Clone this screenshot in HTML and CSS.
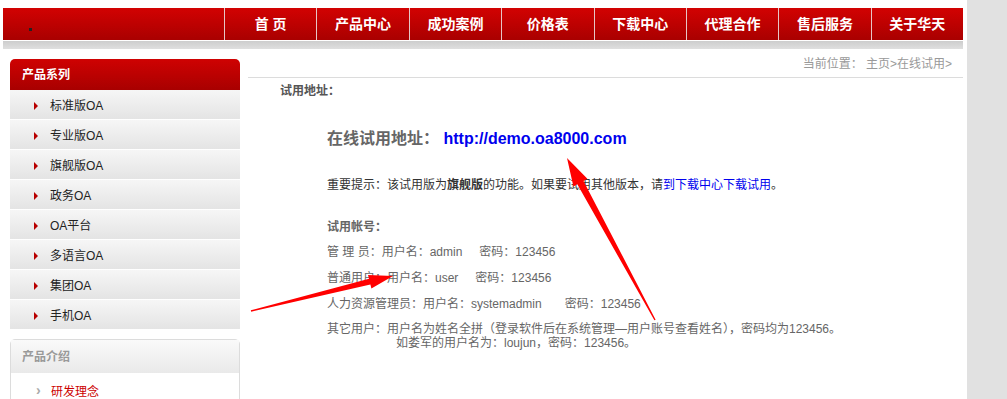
FILE: index.html
```html
<!DOCTYPE html>
<html lang="zh-CN">
<head>
    <meta charset="UTF-8">
    <title>在线试用</title>
    <link rel="stylesheet" href="styles.css">
</head>
<body>
    <div class="page">
        <div class="nav">
            <div class="nav-logo"><span class="logo-dot"></span></div>
            <a class="nav-item" href="#">首 页</a>
            <a class="nav-item" href="#">产品中心</a>
            <a class="nav-item" href="#">成功案例</a>
            <a class="nav-item" href="#">价格表</a>
            <a class="nav-item" href="#">下载中心</a>
            <a class="nav-item" href="#">代理合作</a>
            <a class="nav-item" href="#">售后服务</a>
            <a class="nav-item" href="#">关于华天</a>
        </div>
        <div class="nav-shadow"></div>

        <div class="layout">
            <aside class="sidebar">
                <div class="side-box">
                    <h3 class="side-title">产品系列</h3>
                    <ul class="side-list">
                        <li>标准版OA</li>
                        <li>专业版OA</li>
                        <li>旗舰版OA</li>
                        <li>政务OA</li>
                        <li>OA平台</li>
                        <li>多语言OA</li>
                        <li>集团OA</li>
                        <li>手机OA</li>
                    </ul>
                </div>
                <div class="intro-box">
                    <h3 class="intro-title">产品介绍</h3>
                    <ul class="intro-list">
                        <li>研发理念</li>
                    </ul>
                </div>
            </aside>

            <main class="main">
                <div class="crumb">当前位置： 主页&gt;在线试用&gt;</div>
                <div class="label">试用地址：</div>
                <div class="content">
                    <p class="demo-url">在线试用地址： <a href="#">http://demo.oa8000.com</a></p>
                    <p class="notice">重要提示：该试用版为<b>旗舰版</b>的功能。如果要试用其他版本，请<a href="#">到下载中心下载试用</a>。</p>
                    <div class="accounts-title">试用帐号：</div>
                    <p class="account">管 理 员：用户名：admin<span class="pwd">密码：123456</span></p>
                    <p class="account">普通用户：用户名：user<span class="pwd">密码：123456</span></p>
                    <p class="account">人力资源管理员：用户名：systemadmin<span class="pwd pwd-wide">密码：123456</span></p>
                    <p class="account-other">其它用户：用户名为姓名全拼（登录软件后在系统管理—用户账号查看姓名），密码均为123456。<span class="other-example">如娄军的用户名为：loujun，密码：123456。</span></p>
                </div>
            </main>
        </div>

        <!-- red annotation arrows drawn over the page -->
        <svg class="arrows" width="1007" height="399" viewBox="0 0 1007 399">
            <polygon fill="#ff0000" points="655.6,319.7 583.5,180.9 587.4,178.8 567,158 573.4,186.4 577.3,184.3 654.4,320.3"/>
            <polygon fill="#ff0000" points="251.2,311.7 370.4,284.6 371.4,288.5 393,276 368,274.9 369,278.8 250.8,310.3"/>
        </svg>
    </div>
</body>
</html>
```

FILE: styles.css
```css
* {
    margin: 0;
    padding: 0;
    box-sizing: border-box;
}

body {
    background-color: #e1e1e1;
    font-family: "Liberation Sans", "Noto Sans CJK SC", sans-serif;
    font-size: 12px;
    color: #333;
}

a {
    text-decoration: none;
}

.page {
    position: relative;
    width: 967px;
    height: 399px;
    overflow: hidden;
    background: #fff;
    padding-top: 8px;
}

/* top navigation */
.nav {
    display: flex;
    height: 32px;
    margin: 0 4px 0 3px;
    background: linear-gradient(#d20202, #a90000);
}

.nav-logo {
    width: 221px;
    padding: 20px 0 0 26px;
}

.logo-dot {
    display: block;
    width: 3px;
    height: 3px;
    background: #222;
}

.nav-item {
    flex: 1;
    border-left: 1px solid #e6c6c6;
    color: #fff;
    font-size: 14px;
    font-weight: bold;
    line-height: 32px;
    text-align: center;
}

.nav-shadow {
    height: 8px;
    margin: 1px 4px 0 3px;
    background: linear-gradient(#cdcdcd, #dfdfdf);
}

.layout {
    display: flex;
    margin-top: 10px;
}

/* sidebar */
.sidebar {
    width: 230px;
    margin-left: 10px;
}

.side-title {
    height: 31px;
    padding: 1px 0 0 12px;
    border-radius: 5px 5px 0 0;
    background: linear-gradient(#cf0202, #a80000);
    color: #fff;
    font-size: 12px;
    line-height: 30px;
}

.side-list {
    list-style: none;
}

.side-list li {
    position: relative;
    height: 29px;
    margin-bottom: 1px;
    padding: 3px 0 0 40px;
    background: linear-gradient(#f6f6f6, #e4e4e4);
    color: #222;
    font-size: 12px;
    line-height: 26px;
}

.side-list li::before {
    content: "";
    position: absolute;
    left: 24px;
    top: 12px;
    border-left: 4px solid #b80000;
    border-top: 4px solid transparent;
    border-bottom: 4px solid transparent;
}

.intro-box {
    margin-top: 10px;
    border: 1px solid #dcdcdc;
    border-radius: 5px 5px 0 0;
}

.intro-title {
    height: 33px;
    padding: 1px 0 0 11px;
    background: linear-gradient(#fafafa, #e9e9e9);
    color: #999;
    font-size: 12px;
    line-height: 32px;
}

.intro-list {
    list-style: none;
    padding-top: 10px;
}

.intro-list li {
    position: relative;
    padding-left: 40px;
    color: #c00;
    font-size: 12px;
    line-height: 18px;
}

.intro-list li::before {
    content: "›";
    position: absolute;
    left: 25px;
    top: -2px;
    color: #aaa;
    font-size: 14px;
    font-weight: bold;
}

/* main content */
.main {
    flex: 1;
    margin: -9px 4px 0 8px;
}

.crumb {
    height: 28px;
    padding: 6px 11px 0 0;
    border-bottom: 1px solid #dcdcdc;
    color: #999;
    line-height: 16px;
    text-align: right;
}

.label {
    margin-top: 3px;
    padding-left: 32px;
    color: #555;
    font-weight: bold;
    line-height: 20px;
}

.content {
    padding-left: 79px;
}

.demo-url {
    margin-top: 26px;
    color: #666;
    font-size: 16px;
    font-weight: bold;
    line-height: 24px;
}

.demo-url a {
    color: #0000ee;
}

.notice {
    margin-top: 24px;
    color: #333;
    line-height: 20px;
}

.notice a {
    color: #0000ee;
}

.accounts-title {
    margin-top: 22px;
    color: #666;
    font-weight: bold;
    line-height: 20px;
}

.account {
    margin-top: 2px;
    color: #666;
    line-height: 26px;
}

.account + .account {
    margin-top: 0;
}

.pwd {
    margin-left: 17px;
}

.pwd-wide {
    margin-left: 23px;
}

.account-other {
    margin-top: 5px;
    color: #666;
    line-height: 14px;
}

.other-example {
    display: block;
    padding-left: 69px;
}

.arrows {
    position: absolute;
    top: 0;
    left: 0;
    pointer-events: none;
}
```
